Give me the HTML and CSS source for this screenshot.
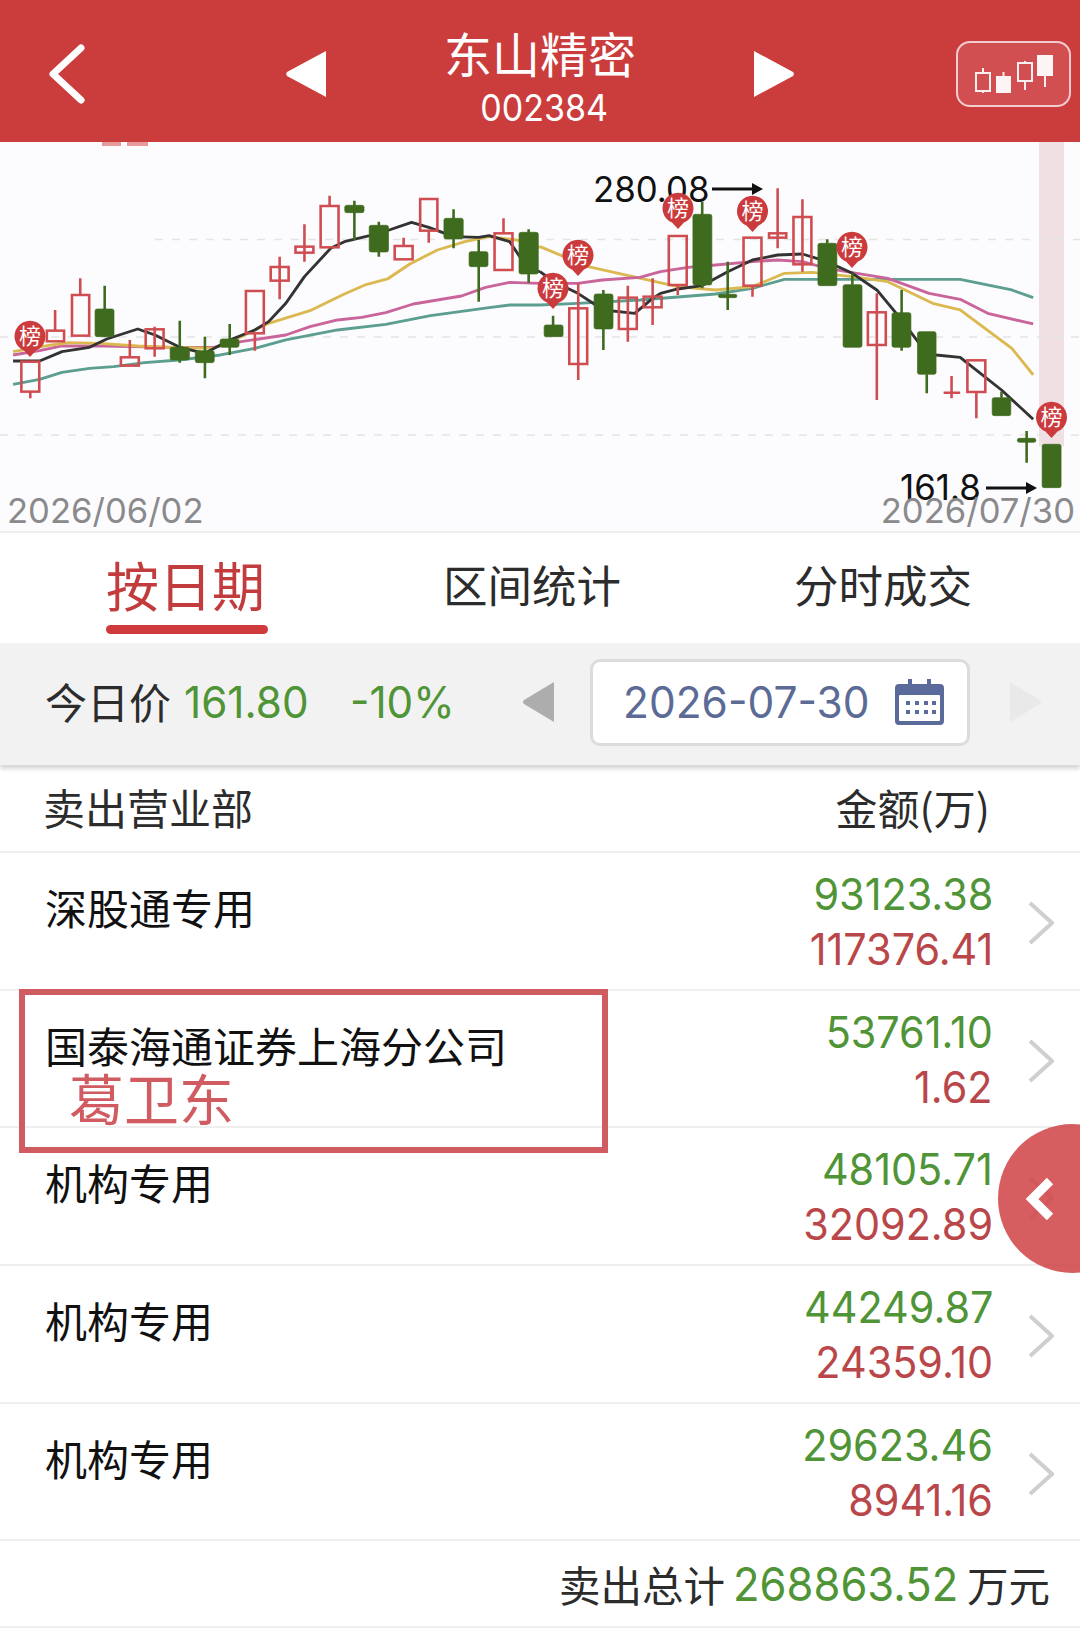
FILE: index.html
```html
<!DOCTYPE html>
<html lang="zh">
<head>
<meta charset="utf-8">
<title>东山精密</title>
<link rel="stylesheet" href="styles.css">
</head>
<body>
<div class="page">
  <header class="topbar">
    <svg class="back" viewBox="0 0 44 64"><path d="M36 6 8 32l28 26"/></svg>
    <svg class="tri" viewBox="0 0 44 50"><path d="M42 2v46L3 27a3 3 0 0 1 0-4z"/></svg>
    <div class="title"><div class="name">东山精密</div><div class="code">002384</div></div>
    <svg class="tri" viewBox="0 0 44 50"><path d="M2 2v46l39-21a3 3 0 0 0 0-4z"/></svg>
    <div class="kbtn">
      <svg viewBox="0 0 111 62">
        <path class="ko" d="M18 30h14v18H18zM25 25v5M25 48v2"/>
        <path class="kf" d="M38 33h15v17H38z"/>
        <path class="ko" d="M45.500 29v4"/>
        <path class="ko" d="M60 20h14v18H60zM67 18v2M67 38v9"/>
        <path class="kf" d="M79 12h16v21H79z"/>
        <path class="ko" d="M87 33v11"/>
      </svg>
    </div>
  </header>

  <svg class="chart" viewBox="0 142 1080 389">
    <rect class="band" x="1039" y="142" width="25" height="304"/>
    <rect class="frag" x="102" y="142" width="19" height="4"/>
    <rect class="frag" x="127" y="142" width="21" height="4"/>
    <path class="grid" d="M155 239.500H1080M0 337H1080M0 435H1080"/>

    <g transform="translate(0 140) scale(.3444 .3333)">
      <polyline class="ma teal" points="38,733 115,718 180,697 260,685 330,680 420,668 520,660 640,645 740,625 830,600 980,570 1120,553 1250,527 1420,503 1480,495 1568,495"/>
      <polyline class="ma pink" points="38,645 115,632 180,618 300,618 500,622 620,622 700,605 830,585 900,560 980,540 1050,532 1120,518 1200,492 1340,468 1410,442 1480,427 1568,430"/>
      <polyline class="ma yellow" points="38,635 150,615 200,608 290,610 400,618 500,622 620,625 700,590 780,550 900,512 1000,462 1060,435 1125,417 1190,372 1270,330 1350,305 1420,290 1500,300 1568,322"/>
      <polyline class="ma black" points="38,663 115,663 180,635 260,622 310,597 400,567 450,585 522,622 595,640 667,600 740,570 780,545 830,490 884,410 960,325 1000,305 1070,288 1130,270 1195,247 1245,262 1317,290 1390,292 1420,287 1480,305 1535,390 1568,395"/>

      <path class="wick up" d="M88 755V775M160 510V572M233 415V465M377 600V652M449 560V650M740 580V632M812 350V478M884 253V365M957 167V198M1172 293V318M1245 272V308M1462 235V280"/>
      <path class="wick down" d="M304 437V590M522 542V668M595 590V715M667 552V645M1029 182V300M1100 245V350M1317 208V325M1390 300V485M1535 268V428"/>
      <rect class="up" x="62" y="665" width="52" height="90"/>
      <rect class="up" x="136" y="572" width="50" height="32"/>
      <rect class="up" x="209" y="465" width="50" height="122"/>
      <rect class="up" x="351" y="652" width="52" height="25"/>
      <rect class="up" x="423" y="568" width="52" height="57"/>
      <rect class="up" x="714" y="453" width="52" height="127"/>
      <rect class="up" x="786" y="381" width="52" height="41"/>
      <rect class="up" x="858" y="320" width="52" height="18"/>
      <rect class="up" x="931" y="198" width="52" height="124"/>
      <rect class="up" x="1146" y="318" width="52" height="40"/>
      <rect class="up" x="1220" y="177" width="50" height="95"/>
      <rect class="up" x="1436" y="280" width="52" height="110"/>
      <rect class="dn" x="276" y="507" width="55" height="83"/>
      <rect class="dn" x="494" y="622" width="56" height="38"/>
      <rect class="dn" x="567" y="632" width="55" height="36"/>
      <rect class="dn" x="639" y="597" width="55" height="25"/>
      <rect class="dn" x="1001" y="196" width="56" height="22"/>
      <rect class="dn" x="1072" y="256" width="56" height="80"/>
      <rect class="dn" x="1289" y="235" width="56" height="62"/>
      <rect class="dn" x="1362" y="335" width="55" height="45"/>
      <rect class="dn" x="1507" y="277" width="56" height="125"/>
    </g>

    <g transform="translate(540 140) scale(.3444 .3333)">
      <polyline class="ma teal" points="0,495 110,490 290,480 510,462 617,445 710,418 1010,418 1220,418 1370,450 1432,473"/>
      <polyline class="ma yellow" points="0,320 140,380 270,410 400,440 510,450 617,440 710,400 790,397 907,410 1010,425 1140,490 1220,510 1370,625 1432,705"/>
      <polyline class="ma pink" points="0,430 110,430 180,420 290,412 350,395 430,382 510,375 617,365 690,360 762,365 834,385 907,398 1010,415 1130,460 1220,478 1300,520 1432,552"/>
      <polyline class="ma black" points="0,395 40,425 110,460 184,510 255,518 275,520 327,475 350,460 400,447 470,437 545,395 617,360 690,345 762,342 834,365 907,400 978,450 1050,540 1123,640 1150,645 1220,652 1340,750 1432,838"/>

      <path class="wick up" d="M111 430V720M255 437V605M327 415V555M400 435V465M617 437V470M690 145V325M762 178V395M978 460V780M1195 708V775M1267 756V835M1172 758H1220"/>
      <path class="wick down" d="M38 527V555M184 450V630M471 185V445M545 365V510M834 298V310M907 400V434M1050 450V632M1123 703V760M1340 755V773M1413 873V968"/>
      <rect class="up" x="85" y="505" width="52" height="167"/>
      <rect class="up" x="229" y="473" width="52" height="94"/>
      <rect class="up" x="301" y="470" width="52" height="32"/>
      <rect class="up" x="374" y="288" width="52" height="147"/>
      <rect class="up" x="591" y="293" width="52" height="144"/>
      <rect class="up" x="665" y="280" width="50" height="13"/>
      <rect class="up" x="736" y="231" width="52" height="142"/>
      <rect class="up" x="952" y="517" width="52" height="98"/>
      <rect class="up" x="1241" y="661" width="52" height="95"/>
      <rect class="dn" x="12" y="555" width="55" height="35"/>
      <rect class="dn" x="157" y="462" width="55" height="105"/>
      <rect class="dn" x="444" y="223" width="55" height="212"/>
      <rect class="dn" x="518" y="463" width="54" height="10"/>
      <rect class="dn" x="807" y="310" width="55" height="127"/>
      <rect class="dn" x="880" y="434" width="55" height="188"/>
      <rect class="dn" x="1022" y="518" width="55" height="104"/>
      <rect class="dn" x="1096" y="575" width="54" height="128"/>
      <rect class="dn" x="1313" y="773" width="54" height="54"/>
      <rect class="dn" x="1386" y="895" width="54" height="12"/>
      <rect class="dn" x="1458" y="913" width="55" height="130"/>
    </g>

    <text class="val" x="593" y="202">280.08</text>
    <path class="arrow" d="M712 189H760"/><path class="head" d="M752 183l11 6-11 6z"/>
    <text class="val" x="900" y="500">161.8</text>
    <path class="arrow" d="M986 488H1034"/><path class="head" d="M1026 482l11 6-11 6z"/>
    <text class="date" x="7" y="523">2026/06/02</text>
    <text class="date" x="1075" y="523" text-anchor="end">2026/07/30</text>

    <g transform="translate(30 336)"><path class="pin" d="M-6 14.500A15.500 15.500 0 1 1 6 14.500L0 21z"/><text class="pint" y="8">榜</text></g>
    <g transform="translate(578 255)"><path class="pin" d="M-6 14.500A15.500 15.500 0 1 1 6 14.500L0 21z"/><text class="pint" y="8">榜</text></g>
    <g transform="translate(553 288)"><path class="pin" d="M-6 14.500A15.500 15.500 0 1 1 6 14.500L0 21z"/><text class="pint" y="8">榜</text></g>
    <g transform="translate(678 208)"><path class="pin" d="M-6 14.500A15.500 15.500 0 1 1 6 14.500L0 21z"/><text class="pint" y="8">榜</text></g>
    <g transform="translate(752.500 211)"><path class="pin" d="M-6 14.500A15.500 15.500 0 1 1 6 14.500L0 21z"/><text class="pint" y="8">榜</text></g>
    <g transform="translate(852 247)"><path class="pin" d="M-6 14.500A15.500 15.500 0 1 1 6 14.500L0 21z"/><text class="pint" y="8">榜</text></g>
    <g transform="translate(1051.500 417)"><path class="pin" d="M-6 14.500A15.500 15.500 0 1 1 6 14.500L0 21z"/><text class="pint" y="8">榜</text></g>
  </svg>

  <nav class="tabs">
    <div class="tab active"><span>按日期</span></div>
    <div class="tab second"><span>区间统计</span></div>
    <div class="tab third"><span>分时成交</span></div>
  </nav>

  <section class="filter">
    <span class="label">今日价</span>
    <span class="num price">161.80</span>
    <span class="num pct">-10%</span>
    <svg class="ftri prev" viewBox="0 0 32 40"><path d="M31 0v40L1 22a2.500 2.500 0 0 1 0-4z"/></svg>
    <div class="datebox">
      <span class="num dateval">2026-07-30</span>
      <svg class="cal" viewBox="0 0 49 46">
        <path class="calf" d="M4 5h9V0h4v5h15V0h4v5h9a4 4 0 0 1 4 4v33a4 4 0 0 1-4 4H4a4 4 0 0 1-4-4V9a4 4 0 0 1 4-4z"/>
        <rect class="calw" x="4" y="16" width="41" height="26" rx="1"/>
        <path class="cald" d="M11 22h4v4h-4zM20 22h4v4h-4zM29 22h4v4h-4zM37 22h4v4h-4zM11 31h4v4h-4zM20 31h4v4h-4zM29 31h4v4h-4zM37 31h4v4h-4z"/>
      </svg>
    </div>
    <svg class="ftri next" viewBox="0 0 32 40"><path d="M1 0v40l30-18a2.500 2.500 0 0 0 0-4z"/></svg>
  </section>

  <div class="thead"><span>卖出营业部</span><span>金额(万)</span></div>

  <div class="row">
    <div class="broker">深股通专用</div>
    <div class="amts"><span class="g">93123.38</span><span class="r">117376.41</span></div>
    <svg class="chev" viewBox="0 0 26 44"><path d="M2 2l22 20L2 42"/></svg>
  </div>
  <div class="row">
    <div class="broker">国泰海通证券上海分公司</div>
    <div class="amts"><span class="g">53761.10</span><span class="r">1.62</span></div>
    <svg class="chev" viewBox="0 0 26 44"><path d="M2 2l22 20L2 42"/></svg>
  </div>
  <div class="row">
    <div class="broker">机构专用</div>
    <div class="amts"><span class="g">48105.71</span><span class="r">32092.89</span></div>
    <svg class="chev" viewBox="0 0 26 44"><path d="M2 2l22 20L2 42"/></svg>
  </div>
  <div class="row">
    <div class="broker">机构专用</div>
    <div class="amts"><span class="g">44249.87</span><span class="r">24359.10</span></div>
    <svg class="chev" viewBox="0 0 26 44"><path d="M2 2l22 20L2 42"/></svg>
  </div>
  <div class="row">
    <div class="broker">机构专用</div>
    <div class="amts"><span class="g">29623.46</span><span class="r">8941.16</span></div>
    <svg class="chev" viewBox="0 0 26 44"><path d="M2 2l22 20L2 42"/></svg>
  </div>

  <footer class="total">
    <span>卖出总计</span><span class="num sum">268863.52</span><span>万元</span>
  </footer>

  <div class="note"><span>葛卫东</span></div>
  <div class="fab"><svg viewBox="0 0 30 46"><path d="M25 5 7 23l18 18"/></svg></div>
</div>
</body>
</html>
```

FILE: styles.css
```css
* { box-sizing: border-box; }
html, body { margin: 0; padding: 0; background: #fff; }
body { font-family: "Noto Sans CJK SC", "Liberation Sans", sans-serif; color: #222; }
.page { position: relative; width: 1080px; height: 1632px; overflow: hidden; background: #fff; }

.topbar { height: 142px; background: #cb3c3c; display: flex; align-items: center; color: #fff; }
.back { width: 44px; height: 64px; margin-left: 45px; margin-top: 5px; flex: none; }
.back path { fill: none; stroke: #fff; stroke-width: 7px; stroke-linecap: round; stroke-linejoin: round; }
.tri { width: 44px; height: 50px; flex: none; margin-top: 6px; }
.tri path { fill: #fff; }
.topbar .tri:nth-of-type(2) { margin-left: 195px; }
.title { width: 424px; text-align: center; padding-top: 10px; }
.name { font-size: 48px; line-height: 54px; height: 54px; }
.code { font-family: Inter, "Liberation Sans", sans-serif; font-size: 37px; line-height: 40px; margin-top: 9px; padding-left: 9px; transform: scaleX(.92); }
.kbtn { width: 115px; height: 66px; margin-left: 160px; margin-top: 6px; flex: none; border: 2px solid #f3cdcd; border-radius: 14px; background: #d14f50; }
.kbtn svg { display: block; width: 111px; height: 62px; }
.ko { fill: none; stroke: #fbeeee; stroke-width: 2px; }
.kf { fill: #fdf5f5; }

.chart { display: block; width: 1080px; height: 391px; background: #fcfcfe; border-bottom: 2px solid #eee; }
.band { fill: #f0dfe3; }
.frag { fill: #e79a9c; }
.grid { fill: none; stroke: #e4e4e4; stroke-width: 1.500px; stroke-dasharray: 8 9; }
.ma { fill: none; stroke-width: 8.500px; stroke-linejoin: round; }
.black { stroke: #333; }
.yellow { stroke: #dcb950; }
.pink { stroke: #c9659a; }
.teal { stroke: #5c9e90; }
.wick { fill: none; stroke-width: 7.500px; }
.wick.up { stroke: #cf4c50; }
.wick.down { stroke: #3f6b1e; }
.up { fill: none; stroke: #cf4c50; stroke-width: 7.500px; }
.dn { fill: #3f6b1e; stroke: #3f6b1e; stroke-width: 2px; rx: 6px; }
.val { font-family: Inter, "Liberation Sans", sans-serif; font-size: 34.800px; fill: #111; }
.arrow { fill: none; stroke: #111; stroke-width: 3px; }
.head { fill: #111; }
.date { font-family: Inter, "Liberation Sans", sans-serif; font-size: 34.600px; fill: #8a8a8c; }
.pin { fill: #cb3b3d; }
.pint { font-size: 22px; fill: #fff; text-anchor: middle; }

.tabs { height: 110px; display: flex; background: #fff; }
.tab { font-size: 44.500px; line-height: 60px; padding-top: 21px; position: relative; color: #2c2c2c; flex: none; white-space: nowrap; }
.tab.active { font-size: 53px; line-height: 66px; padding-top: 18px; margin-left: 106px; color: #c23c3e; width: 159px; }
.tab.active span { display: block; }
.tab.active::after { content: ""; display: block; width: 162px; height: 9px; margin: 8px 0 0 0; border-radius: 5px; background: #cf3b3d; }
.tab.second { margin-left: 178px; }
.tab.third { margin-left: 173px; }

.filter { height: 122px; background: #f2f2f2; box-shadow: 0 4px 4px #d8d8d8; display: flex; align-items: center; position: relative; padding: 0 0 4px 45px; }
.label { font-size: 42px; line-height: 56px; color: #2c2c2c; margin-top: -2px; }
.num { font-family: Inter, "Liberation Sans", sans-serif; }
.price, .pct { font-size: 44px; color: #4f9436; display: inline-block; transform: scaleX(.96); transform-origin: left center; white-space: nowrap; }
.price { margin-left: 13px; width: 137px; }
.pct { margin-left: 29px; width: 107px; }
.ftri { width: 32px; height: 40px; flex: none; }
.ftri.prev { margin-left: 66px; }
.ftri.prev path { fill: #adadad; }
.ftri.next { margin-left: 39px; }
.ftri.next path { fill: #e9e9e9; }
.datebox { width: 380px; height: 87px; margin-left: 35px; background: #fff; border: 3px solid #dcdcdc; border-radius: 10px; display: flex; align-items: center; padding-left: 30px; }
.dateval { font-size: 44px; color: #5b6b96; width: 273px; display: block; transform: scaleX(.965); transform-origin: left center; white-space: nowrap; }
.cal { width: 49px; height: 46px; flex: none; margin-left: -1px; }
.calf { fill: #5a6a9b; }
.calw { fill: #fff; }
.cald { fill: #5a6a9b; }

.thead { height: 88px; display: flex; justify-content: space-between; align-items: center; padding: 0 90px 4px 43px; font-size: 42px; color: #2c2c2c; border-bottom: 2px solid #efefef; }

.row { height: 137.700px; display: flex; border-bottom: 2px solid #efefef; }
.broker { font-size: 42px; line-height: 56px; padding: 26px 0 0 45px; color: #111; flex: 1; }
.amts { display: flex; flex-direction: column; align-items: flex-end; padding-top: 14px; font-family: Inter, "Liberation Sans", sans-serif; font-size: 44px; line-height: 55px; }
.amts span { display: block; transform: scaleX(.94); transform-origin: right center; }
.g { color: #4f9436; }
.r { color: #b9474a; }
.chev { width: 26px; height: 44px; flex: none; margin: 48px 26px 0 35px; }
.chev path { fill: none; stroke: #cfcfcf; stroke-width: 4px; }

.total { height: 87px; display: flex; justify-content: flex-end; align-items: center; gap: 8px; padding-right: 30px; font-size: 41.500px; color: #2c2c2c; border-bottom: 2px solid #efefef; }
.sum { font-size: 47px; color: #4f9436; width: 226px; white-space: nowrap; transform: scaleX(.926); transform-origin: left center; }

.note { position: absolute; left: 19px; top: 989px; width: 589px; height: 164px; border: 6px solid #d05c62; padding: 71px 0 0 44px; }
.note span { display: block; font-size: 55px; line-height: 60px; color: #d05c62; }
.fab { position: absolute; left: 998px; top: 1124px; width: 149px; height: 149px; border-radius: 50%; background: rgba(208, 72, 74, .88); display: flex; align-items: center; padding-left: 27px; }
.fab svg { width: 30px; height: 46px; }
.fab path { fill: none; stroke: #fff; stroke-width: 9px; }
```
